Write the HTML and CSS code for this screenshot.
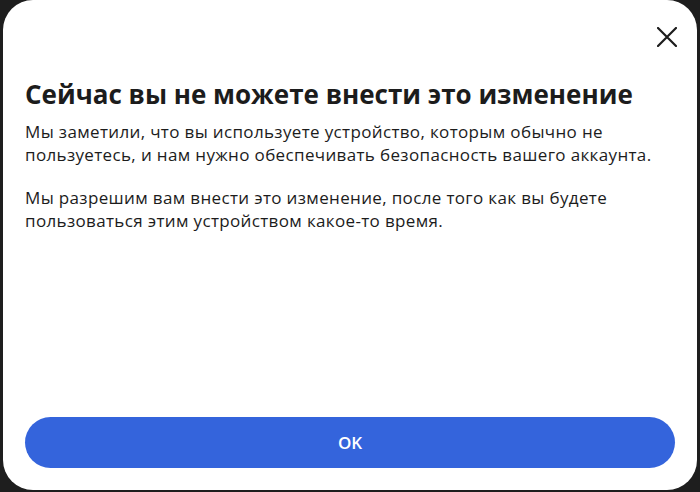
FILE: index.html
```html
<!DOCTYPE html>
<html lang="ru">
<head>
<meta charset="utf-8">
<link rel="stylesheet" href="styles.css">
</head>
<body>
<div class="card">
  <div class="top">
    <button class="close" aria-label="Закрыть">
      <svg width="20" height="20" viewBox="0 0 20 20"><path d="M1 1 L19 19 M19 1 L1 19" stroke="#1c1c1c" stroke-width="2.2" stroke-linecap="round" fill="none"/></svg>
    </button>
  </div>
  <h1 class="title">Сейчас вы не можете внести это изменение</h1>
  <p class="text">Мы заметили, что вы используете устройство, которым обычно не пользуетесь, и нам нужно обеспечивать безопасность вашего аккаунта.</p>
  <p class="text">Мы разрешим вам внести это изменение, после того как вы будете пользоваться этим устройством какое-то время.</p>
  <button class="ok">OK</button>
</div>
</body>
</html>
```
FILE: styles.css
```css
html, body {
  margin: 0;
  padding: 0;
  background: #1e1e1e;
}
body {
  width: 700px;
  height: 492px;
  overflow: hidden;
  font-family: "Open Sans", "Noto Sans", sans-serif;
  color: #1c1e21;
}
.card {
  box-sizing: border-box;
  margin: 0 3px 0 3px;
  height: 490px;
  background: #fff;
  border-radius: 30px;
  padding: 0 22px 22px 22px;
  display: flex;
  flex-direction: column;
}
.top {
  display: flex;
  justify-content: flex-end;
  padding-top: 26px;
  height: 50px;
  box-sizing: border-box;
  margin-right: -3px;
}
.close {
  width: 22px;
  height: 22px;
  padding: 0;
  border: none;
  background: none;
  display: flex;
  align-items: center;
  justify-content: center;
}
.title {
  margin: 28px 0 0 0;
  font-size: 26px;
  line-height: 32px;
  font-weight: 700;
  color: #1c1c1c;
}
.text {
  margin: 10px 0 0 0;
  font-size: 17px;
  line-height: 23px;
  letter-spacing: 0.35px;
  color: #1c1c1c;
}
.text + .text {
  margin-top: 20px;
}
.ok {
  margin-top: auto;
  height: 51px;
  border: none;
  border-radius: 26px;
  background: #3464dc;
  color: #fff;
  font-family: inherit;
  font-size: 17px;
  font-weight: 600;
}
```
